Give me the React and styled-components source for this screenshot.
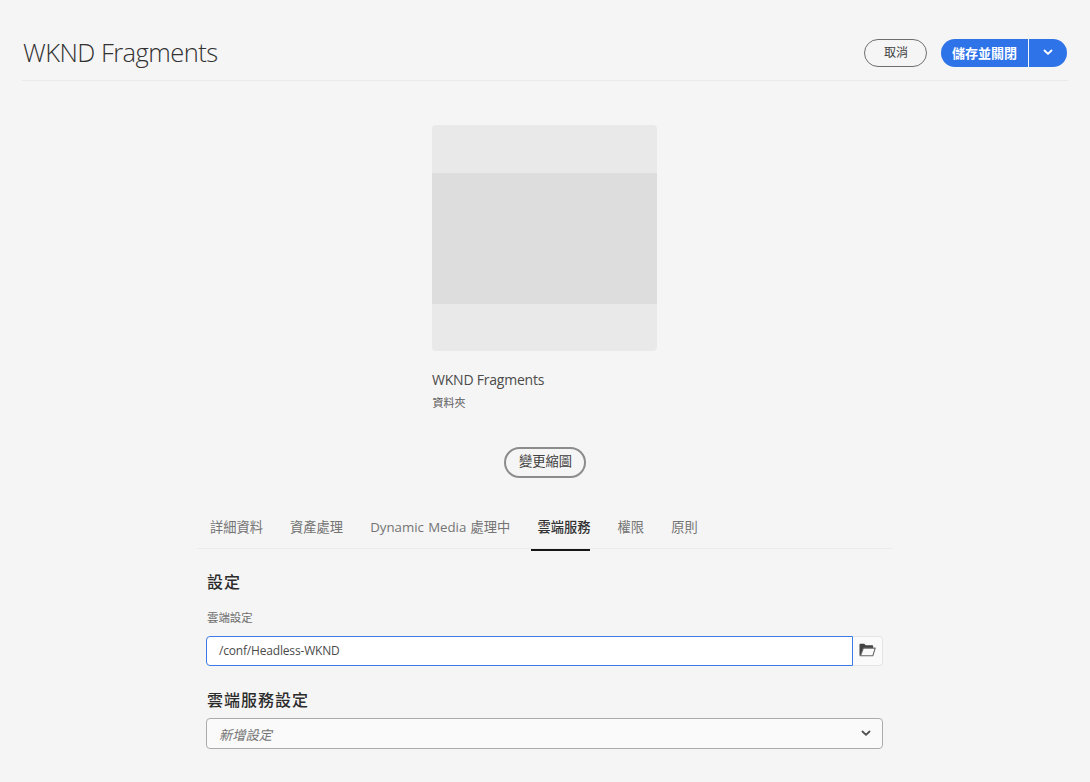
import React from "react";
import styled, { createGlobalStyle } from "styled-components";

const GlobalStyle = createGlobalStyle`
  * { box-sizing: border-box; }
  body {
    margin: 0;
    background: #f5f5f5;
    color: #4b4b4b;
    font-family: "Open Sans", "Noto Sans CJK TC", sans-serif;
  }
  button, input { font-family: inherit; margin: 0; }
`;

const Page = styled.div`
  height: 782px;
  overflow: hidden;
  display: flex;
  flex-direction: column;
`;

const Header = styled.header`
  height: 81px;
  margin: 0 22px;
  padding-top: 39px;
  border-bottom: 1px solid #eaeaea;
  display: flex;
  align-items: flex-start;
  justify-content: space-between;
  flex: none;
`;

const Title = styled.h1`
  margin: 0;
  padding-left: 1px;
  font-size: 25.5px;
  line-height: 26px;
  font-weight: 300;
  letter-spacing: -0.53px;
  color: #323232;
  white-space: nowrap;
`;

const Actions = styled.div`
  display: flex;
  gap: 14px;
  height: 28px;
  padding-right: 1px;
`;

const OutlineButton = styled.button`
  width: ${(p) => p.$width}px;
  height: ${(p) => p.$height}px;
  padding: 0 0 ${(p) => p.$lift}px 1px;
  border: ${(p) => p.$border};
  border-radius: 16px;
  background: transparent;
  color: #404040;
  font-size: ${(p) => p.$size}px;
  line-height: 20px;
  white-space: nowrap;
`;

const SplitButton = styled.div`
  display: flex;
  gap: 1px;
  width: 126px;
`;

const PrimaryButton = styled.button`
  width: 87px;
  padding: 0 0 1px;
  border: 0;
  border-radius: 14px 0 0 14px;
  background: #2f73e8;
  color: #fff;
  font-size: 13px;
  font-weight: 700;
  line-height: 20px;
  white-space: nowrap;
`;

const PrimaryToggle = styled.button`
  flex: 1;
  padding: 0 0 1px;
  border: 0;
  border-radius: 0 14px 14px 0;
  background: #2f73e8;
  color: #fff;
  display: flex;
  align-items: center;
  justify-content: center;
`;

const Preview = styled.section`
  width: 225px;
  margin: 44px 0 0 432px;
  flex: none;
  display: flex;
  flex-direction: column;
`;

const Thumbnail = styled.div`
  height: 226px;
  padding: 48px 0 47px;
  border-radius: 4px;
  background: #e9e9e9;
`;

const ThumbnailBand = styled.div`
  height: 131px;
  background: #dddddd;
`;

const AssetName = styled.div`
  margin-top: 19px;
  font-size: 14px;
  line-height: 20px;
  letter-spacing: -0.22px;
  color: #4b4b4b;
`;

const AssetType = styled.div`
  margin-top: 5px;
  padding-left: 0.5px;
  font-size: 11px;
  line-height: 16px;
  color: #5c5c5c;
`;

const ThumbnailAction = styled.div`
  margin-top: 36px;
  display: flex;
  justify-content: center;
  padding-left: 1px;
`;

const Tabs = styled.nav`
  width: 695px;
  height: 50px;
  margin: 23px 0 0 197px;
  padding-left: 13px;
  flex: none;
  display: flex;
  gap: 27.1px;
  background: linear-gradient(#ebebeb, #ebebeb) 0 47px / 100% 1px no-repeat;
`;

const Tab = styled.a`
  height: 50px;
  padding: 16px 0 0 ${(p) => (p.$active ? 6 : 0)}px;
  margin-left: ${(p) => (p.$active ? -6 : 0)}px;
  border-bottom: 2px solid ${(p) => (p.$active ? "#161616" : "transparent")};
  font-size: 13.25px;
  line-height: 20px;
  word-spacing: 0.8px;
  font-weight: ${(p) => (p.$active ? 500 : 400)};
  color: ${(p) => (p.$active ? "#323232" : "#747474")};
  white-space: nowrap;
`;

const Form = styled.form`
  width: 677px;
  margin-left: 206px;
  display: flex;
  flex-direction: column;
`;

const SectionTitle = styled.h2`
  margin: ${(p) => p.$top}px 0 0 1px;
  font-size: 16px;
  line-height: 24px;
  font-weight: 500;
  letter-spacing: 1px;
  color: #2c2c2c;
`;

const Label = styled.label`
  margin: 16px 0 0 1px;
  font-size: 11.4px;
  line-height: 16px;
  color: #6e6e6e;
`;

const PathField = styled.div`
  margin-top: 10px;
  height: 30px;
  display: flex;
`;

const PathInput = styled.input`
  width: 647px;
  padding: 0 11px 2px 12px;
  border: 1px solid #3b7ae8;
  border-radius: 4px 0 0 4px;
  background: #fff;
  color: #4b4b4b;
  font-size: 12px;
  letter-spacing: -0.18px;
  outline: 0;
`;

const BrowseButton = styled.button`
  width: 30px;
  padding: 0 0 2px;
  border: 1px solid #e4e4e4;
  border-left: 0;
  border-radius: 0 4px 4px 0;
  background: #fafafa;
  display: flex;
  align-items: center;
  justify-content: center;
`;

const Select = styled.div`
  height: 31px;
  margin-top: 6px;
  padding: 0 11px 0 12px;
  border: 1px solid #ababab;
  border-radius: 4px;
  background: #fafafa;
  display: flex;
  align-items: center;
  justify-content: space-between;
  font-size: 13.25px;
  font-style: italic;
  line-height: 20px;
  color: #747474;
`;

const Placeholder = styled.span`
  padding-top: 2px;
`;

function Chevron({ color }) {
  return (
    <svg width="10" height="7" viewBox="0 0 10 7" fill="none" aria-hidden="true">
      <path d="M1.5 1.5 5 4.9l3.5-3.4" stroke={color} strokeWidth="1.8" strokeLinecap="round" strokeLinejoin="round" />
    </svg>
  );
}

function FolderOpen() {
  return (
    <svg width="17" height="14" viewBox="0 0 17 14" aria-hidden="true">
      <path d="M.5 12.6V1.5q0-.8.8-.8h3.9l1.5 1.6h6.6q.8 0 .8.8v1.9H4.6L1.6 13z" fill="#424242" />
      <path d="M4.4 5.1h11.8l-2.3 7.6H1.5z" fill="#fafafa" stroke="#666" strokeWidth="1.1" strokeLinejoin="round" />
    </svg>
  );
}

const TABS = ["詳細資料", "資產處理", "Dynamic Media 處理中", "雲端服務", "權限", "原則"];
const ACTIVE_TAB = "雲端服務";

export default function App() {
  return (
    <Page>
      <GlobalStyle />
      <Header>
        <Title>WKND Fragments</Title>
        <Actions>
          <OutlineButton $width={63} $height={28} $border="1px solid #6e6e6e" $size={12} $lift={1}>取消</OutlineButton>
          <SplitButton>
            <PrimaryButton>儲存並關閉</PrimaryButton>
            <PrimaryToggle aria-label="更多"><Chevron color="#fff" /></PrimaryToggle>
          </SplitButton>
        </Actions>
      </Header>

      <Preview>
        <Thumbnail><ThumbnailBand /></Thumbnail>
        <AssetName>WKND Fragments</AssetName>
        <AssetType>資料夾</AssetType>
        <ThumbnailAction>
          <OutlineButton $width={82} $height={31} $border="2px solid #8c8c8c" $size={13.25} $lift={3}>變更縮圖</OutlineButton>
        </ThumbnailAction>
      </Preview>

      <Tabs>
        {TABS.map((name) => (
          <Tab key={name} $active={name === ACTIVE_TAB}>{name}</Tab>
        ))}
      </Tabs>

      <Form>
        <SectionTitle $top={19}>設定</SectionTitle>
        <Label htmlFor="cloud-path">雲端設定</Label>
        <PathField>
          <PathInput id="cloud-path" defaultValue="/conf/Headless-WKND" />
          <BrowseButton type="button" aria-label="瀏覽"><FolderOpen /></BrowseButton>
        </PathField>
        <SectionTitle $top={22}>雲端服務設定</SectionTitle>
        <Select>
          <Placeholder>新增設定</Placeholder>
          <Chevron color="#505050" />
        </Select>
      </Form>
    </Page>
  );
}
